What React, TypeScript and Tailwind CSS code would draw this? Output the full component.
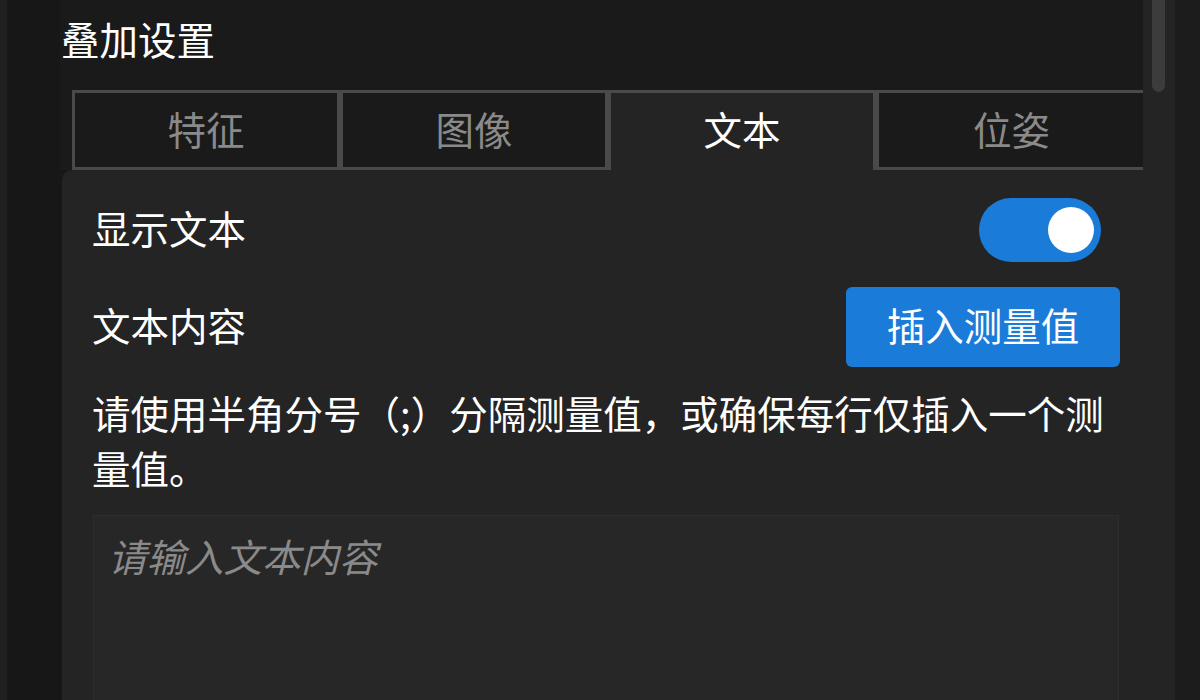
import React from "react";

const FONT = { fontFamily: '"Microsoft YaHei", "Noto Sans CJK SC", "Noto Sans", sans-serif' };

function Tab({ label, active, last }: { label: string; active?: boolean; last?: boolean }) {
  return (
    <div
      className={
        "w-[268px] shrink-0 h-[80px] flex items-center justify-center text-[38.5px] border-t-[3px] border-l-[3px] border-[#4a4a4a] " +
        (last ? "" : "border-r-[3px] ") +
        (active ? "bg-[#242424] text-white pb-[6px]" : "bg-[#1a1a1a] text-[#8a8a8a] border-b-[3px] pb-[3px]")
      }
    >
      {label}
    </div>
  );
}

export default function App() {
  return (
    <div className="w-[1200px] h-[700px] flex overflow-hidden bg-[#1a1a1a]" style={FONT}>
      <div className="w-[7px] shrink-0 bg-[#202020]" />
      <div className="w-[53px] shrink-0 bg-[#171717]" />
      <div className="w-[1115px] shrink-0 flex flex-col bg-[#171717]">
        <div className="flex h-[170px] shrink-0">
          <div className="w-[1083px] shrink-0 bg-[#1a1a1a] pt-[11px] overflow-hidden">
            <div className="pl-[1px] text-[38.5px] leading-[55px] text-white">叠加设置</div>
            <div className="mt-[24px] ml-[12px] flex">
              <Tab label="特征" />
              <Tab label="图像" />
              <Tab label="文本" active />
              <Tab label="位姿" last />
            </div>
          </div>
          <div className="w-[32px] shrink-0 bg-[#242424] pl-[9px]">
            <div className="w-[13px] h-[92px] rounded-b-full bg-[#3c3c3c]" />
          </div>
        </div>
        <div className="flex-1 ml-[2px] bg-[#242424] rounded-tl-[10px] pl-[30px] pr-[55px] pt-[28px]">
          <div className="flex items-center justify-between h-[64px]">
            <span className="text-[38.5px] leading-[55px] text-white mb-[6px]">显示文本</span>
            <div className="mr-[19px] w-[122px] h-[64px] rounded-full bg-[#1a7bd8] flex items-center justify-end pr-[7px]">
              <div className="w-[46px] h-[46px] rounded-full bg-white" />
            </div>
          </div>
          <div className="mt-[25px] flex items-center justify-between h-[80px]">
            <span className="text-[38.5px] leading-[55px] text-white mb-[6px]">文本内容</span>
            <button className="w-[274px] h-[80px] rounded-[6px] bg-[#1a7bd8] text-white text-[38.5px] leading-[55px] pb-[6px]">
              插入测量值
            </button>
          </div>
          <p className="mt-[18px] text-[38.5px] leading-[55px] text-white">
            请使用半角分号（;）分隔测量值，或确保每行仅插入一个测量值。
          </p>
          <textarea
            className="mt-[20px] ml-[1px] block w-[1026px] h-[240px] resize-none bg-[#272727] border border-[#2d2d2d] pl-[14px] pt-[12px] text-[38.5px] leading-[55px] text-white outline-none placeholder:italic placeholder:text-[#8a8a8a]"
            style={FONT}
            placeholder="请输入文本内容"
          />
        </div>
      </div>
      <div className="flex-1 bg-[#1c1c1c]" />
    </div>
  );
}
